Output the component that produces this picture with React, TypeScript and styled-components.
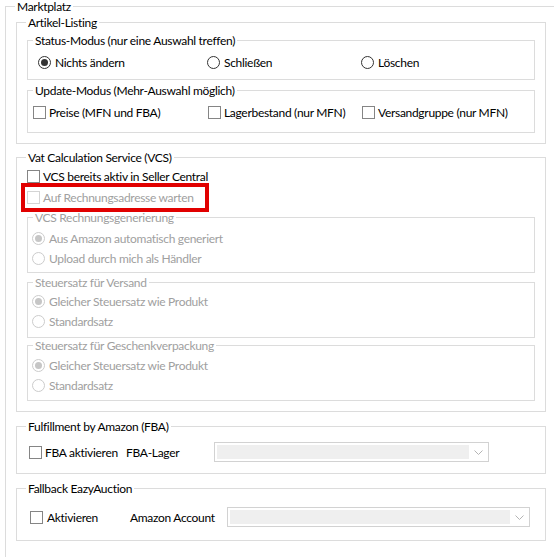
import React from 'react';
import styled, { createGlobalStyle } from 'styled-components';

const Global = createGlobalStyle`
  *, *::before, *::after { box-sizing: border-box; }
  html, body { margin: 0; padding: 0; background: #ffffff; overflow: hidden; }
  body {
    font-family: Lato, "Noto Sans", "Liberation Sans", sans-serif;
    font-size: 12px;
    letter-spacing: -0.3px;
    color: #000000;
  }
`;

const Page = styled.div`
  width: 560px;
  height: 557px;
  overflow: hidden;
  padding-left: 5px;
`;

const Group = styled.fieldset<{ $mt?: number; $w?: number }>`
  margin: ${p => p.$mt ?? 0}px 0 0 0;
  padding: 0;
  border: 1px solid #dcdcdc;
  min-width: 0;
  width: ${p => (p.$w ? `${p.$w}px` : 'auto')};
`;

const Caption = styled.legend<{ $inner?: boolean; $disabled?: boolean }>`
  margin-left: ${p => (p.$inner ? 5 : 9)}px;
  padding: 0 2px;
  line-height: 13px;
  color: ${p => (p.$disabled ? '#a0a0a0' : '#000000')};
  white-space: nowrap;
`;

const Inner = styled.div<{ $pt?: number; $pr?: number; $pb?: number; $pl?: number }>`
  display: flex;
  flex-direction: column;
  padding: ${p => p.$pt ?? 0}px ${p => p.$pr ?? 0}px ${p => p.$pb ?? 0}px ${p => p.$pl ?? 0}px;
`;

const Row = styled.div<{ $cols?: string; $h?: number; $pl?: number }>`
  display: grid;
  grid-template-columns: ${p => p.$cols ?? '1fr'};
  align-items: center;
  height: ${p => p.$h ?? 20}px;
  padding-left: ${p => p.$pl ?? 0}px;
  position: relative;
`;

const Option = styled.label<{ $disabled?: boolean; $gap?: number }>`
  display: flex;
  align-items: center;
  gap: ${p => p.$gap ?? 4}px;
  white-space: nowrap;
  color: ${p => (p.$disabled ? '#a0a0a0' : '#000000')};
`;

const RadioMark = styled.span<{ $checked?: boolean; $disabled?: boolean }>`
  width: 13px;
  height: 13px;
  border-radius: 50%;
  border: 1px solid ${p => (p.$disabled ? '#cccccc' : '#333333')};
  display: flex;
  align-items: center;
  justify-content: center;
  flex: none;
  &::after {
    content: '';
    width: 7px;
    height: 7px;
    border-radius: 50%;
    background: ${p => (p.$disabled ? '#c6c6c6' : '#333333')};
    display: ${p => (p.$checked ? 'block' : 'none')};
  }
`;

const CheckMark = styled.span<{ $disabled?: boolean }>`
  width: 13px;
  height: 13px;
  border: 1px solid ${p => (p.$disabled ? '#d4d4d4' : '#858585')};
  background: #ffffff;
  flex: none;
`;

const FieldLabel = styled.span`
  white-space: nowrap;
`;

const Combo = styled.div`
  height: 20px;
  border: 1px solid #d2d2d2;
  padding: 2px 0 2px 2px;
  display: flex;
  align-items: center;
  background: #ffffff;
`;

const ComboField = styled.div`
  flex: 1;
  height: 100%;
  background: #efefef;
`;

const ComboArrow = styled.div`
  width: 19px;
  display: flex;
  align-items: center;
  justify-content: center;
`;

const Marker = styled.div`
  position: absolute;
  left: -6px;
  top: -4px;
  width: 188px;
  height: 29px;
  border: 4px solid #e10000;
  pointer-events: none;
`;

const Chevron = () => (
  <svg width="9" height="5" viewBox="0 0 9 5">
    <polyline points="0.5,0.5 4.5,4.5 8.5,0.5" fill="none" stroke="#b4b4b4" strokeWidth="1" />
  </svg>
);

const Radio = ({ label, checked, disabled }: { label: string; checked?: boolean; disabled?: boolean }) => (
  <Option $disabled={disabled}>
    <RadioMark $checked={checked} $disabled={disabled} />
    {label}
  </Option>
);

const Check = ({ label, disabled, gap }: { label: string; disabled?: boolean; gap?: number }) => (
  <Option $disabled={disabled} $gap={gap ?? 3}>
    <CheckMark $disabled={disabled} />
    {label}
  </Option>
);

const ComboBox = () => (
  <Combo>
    <ComboField />
    <ComboArrow>
      <Chevron />
    </ComboArrow>
  </Combo>
);

export default function App() {
  return (
    <>
      <Global />
      <Page>
        <Group $w={552}>
          <Caption>Marktplatz</Caption>
          <Inner $pl={10} $pr={10} $pb={40}>
            <Group $mt={3}>
              <Caption>Artikel-Listing</Caption>
              <Inner $pl={10} $pr={10} $pb={10}>
                <Group $mt={5}>
                  <Caption $inner>Status-Modus (nur eine Auswahl treffen)</Caption>
                  <Inner $pt={5} $pb={7}>
                    <Row $cols="169px 154px 1fr" $pl={10}>
                      <Radio label="Nichts ändern" checked />
                      <Radio label="Schließen" />
                      <Radio label="Löschen" />
                    </Row>
                  </Inner>
                </Group>
                <Group $mt={4}>
                  <Caption $inner>Update-Modus (Mehr-Auswahl möglich)</Caption>
                  <Inner $pt={5} $pb={10}>
                    <Row $cols="175px 154px 1fr" $pl={5}>
                      <Check label="Preise (MFN und FBA)" />
                      <Check label="Lagerbestand (nur MFN)" />
                      <Check label="Versandgruppe (nur MFN)" />
                    </Row>
                  </Inner>
                </Group>
              </Inner>
            </Group>

            <Group $mt={7}>
              <Caption>Vat Calculation Service (VCS)</Caption>
              <Inner $pt={2} $pl={10} $pr={10} $pb={10}>
                <Row $h={21}>
                  <Check label="VCS bereits aktiv in Seller Central" />
                </Row>
                <Row $h={21}>
                  <Check label="Auf Rechnungsadresse warten" disabled />
                  <Marker />
                </Row>
                <Group $mt={3}>
                  <Caption $inner $disabled>VCS Rechnungsgenerierung</Caption>
                  <Inner $pt={4} $pb={4} $pl={4}>
                    <Row>
                      <Radio label="Aus Amazon automatisch generiert" checked disabled />
                    </Row>
                    <Row>
                      <Radio label="Upload durch mich als Händler" disabled />
                    </Row>
                  </Inner>
                </Group>
                <Group $mt={3}>
                  <Caption $inner $disabled>Steuersatz für Versand</Caption>
                  <Inner $pt={2} $pb={6} $pl={4}>
                    <Row>
                      <Radio label="Gleicher Steuersatz wie Produkt" checked disabled />
                    </Row>
                    <Row>
                      <Radio label="Standardsatz" disabled />
                    </Row>
                  </Inner>
                </Group>
                <Group $mt={1}>
                  <Caption $inner $disabled>Steuersatz für Geschenkverpackung</Caption>
                  <Inner $pt={3} $pb={5} $pl={4}>
                    <Row>
                      <Radio label="Gleicher Steuersatz wie Produkt" checked disabled />
                    </Row>
                    <Row>
                      <Radio label="Standardsatz" disabled />
                    </Row>
                  </Inner>
                </Group>
              </Inner>
            </Group>

            <Group $mt={8}>
              <Caption>Fulfillment by Amazon (FBA)</Caption>
              <Inner $pt={9} $pb={11} $pl={12}>
                <Row $cols="97px 88px 275px">
                  <Check label="FBA aktivieren" />
                  <FieldLabel>FBA-Lager</FieldLabel>
                  <ComboBox />
                </Row>
              </Inner>
            </Group>

            <Group $mt={8}>
              <Caption>Fallback EazyAuction</Caption>
              <Inner $pt={12} $pb={13} $pl={13}>
                <Row $cols="100px 97px 303px">
                  <Check label="Aktivieren" gap={4} />
                  <FieldLabel>Amazon Account</FieldLabel>
                  <ComboBox />
                </Row>
              </Inner>
            </Group>
          </Inner>
        </Group>
      </Page>
    </>
  );
}
